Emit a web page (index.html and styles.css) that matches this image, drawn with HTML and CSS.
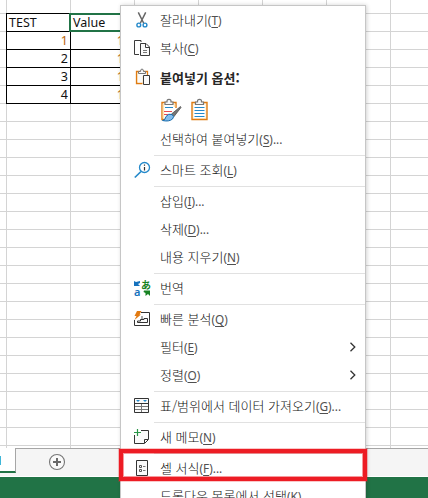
FILE: index.html
```html
<!DOCTYPE html>
<html lang="ko">
<head>
<meta charset="utf-8">
<title>셀 서식</title>
<link rel="stylesheet" href="styles.css">
</head>
<body>
<div class="app">
  <div class="sheet">
    <table class="cells">
      <tr><td class="txt">TEST</td><td class="txt active">Value</td></tr>
      <tr><td class="accent">1</td><td class="accent val">1</td></tr>
      <tr><td>2</td><td class="accent val">1</td></tr>
      <tr><td>3</td><td class="accent val">1</td></tr>
      <tr><td>4</td><td class="accent val">1</td></tr>
    </table>
  </div>
  <div class="tabs">
    <div class="tab"><i></i></div>
    <svg class="add" width="18" height="18" viewBox="0 0 18 18"><circle cx="9" cy="9" r="7.500" fill="#fafafa" stroke="#777" stroke-width="1.100"/><path d="M9 5v8M5 9h8" stroke="#6a6a6a" stroke-width="2"/></svg>
  </div>
  <div class="status"></div>

  <div class="menu">
    <div class="item"><span class="ic"><svg width="18" height="18" viewBox="0 0 18 18"><path d="M5.300 1.300L10.600 12M12.700 1.300L7.400 12" fill="none" stroke="#666" stroke-width="1.500"/><circle cx="5.800" cy="14" r="1.900" fill="#fff" stroke="#2489ca" stroke-width="1.400"/><circle cx="12" cy="14" r="1.900" fill="#fff" stroke="#2489ca" stroke-width="1.400"/></svg></span><span class="lb">잘라내기<b>(<u>T</u>)</b></span></div>
    <div class="item"><span class="ic"><svg width="18" height="18" viewBox="0 0 18 18"><path d="M6 15.500H1.500V1.500H8V3" fill="none" stroke="#3b3b3b"/><path d="M7.500 4.500H13L16.500 8V16.500H7.500Z M12.500 4.500V8.500H16.500" fill="#fafafa" stroke="#3b3b3b"/><path d="M10 11.500h4M10 13.500h4" stroke="#777"/></svg></span><span class="lb">복사<b>(<u>C</u>)</b></span></div>
    <div class="item paste"><span class="ic"><svg width="18" height="18" viewBox="0 0 18 18"><path d="M9.500 14.500H3.500V2.500H14.500V6" fill="#fdf0d8" stroke="#df7b12" stroke-width="1.300"/><path d="M5 3.500H13.500V7H9V13.500H5Z" fill="#fafafa"/><path d="M5.500 4.500V2.500H7.500Q7.500 0 9 0T10.500 2.500H12.500V4.500Z" fill="#f8f8f8" stroke="#777"/><path d="M10.500 6.500H16.500V15.500H10.500Z" fill="#fafafa" stroke="#3b3b3b"/></svg></span><span class="lb strong">붙여넣기 옵션:</span></div>
    <div class="options">
      <svg width="22" height="24" viewBox="0 0 22 24"><path d="M10 21.500H2V4.500H16V10" fill="#fff" stroke="#df7b12" stroke-width="1.400"/><path d="M3.500 20V6M14.500 6v3" stroke="#ffe5b4" stroke-width="1.500"/><path d="M5 6.500V4H7Q6.800 1.300 9 1.300T11 4H13V6.500Z" fill="#f8f8f8" stroke="#777" stroke-width="1.200"/><path d="M5 9.500h8" stroke="#2489ca"/><path d="M4 13.500h8M4 16.500h4" stroke="#e84a50"/><path d="M20.500 8.500L11.500 16L14 18.500L21 9.500Z" fill="#777" stroke="#444" stroke-width=".7"/><path d="M2.500 22.500Q5.500 22 6 18.500Q8.500 15 12 16.500Q15 18.500 12.500 21Q9 24 2.500 22.500Z" fill="#85bdec" stroke="#176cad"/></svg>
      <svg width="22" height="24" viewBox="0 0 22 24"><path d="M2 4.500H17V21.500H2Z" fill="#fff3dc" stroke="#df7b12" stroke-width="1.400"/><path d="M4 6.500H15V20H4Z" fill="#fff"/><path d="M5.500 6.500V4H7.500Q7.300 1.300 9.500 1.300T11.500 4H13.500V6.500Z" fill="#f8f8f8" stroke="#777" stroke-width="1.200"/><path d="M4.500 9.500h10M4.500 12.500h10M4.500 15.500h10M4.500 18.500h10" stroke="#2489ca"/></svg>
    </div>
    <div class="item"><span class="ic"></span><span class="lb">선택하여 붙여넣기<b>(<u>S</u>)...</b></span></div>
    <hr>
    <div class="item"><span class="ic"><svg width="18" height="18" viewBox="0 0 18 18"><circle cx="11.500" cy="6.500" r="5" fill="#fff" stroke="#2489ca" stroke-width="1.300"/><path d="M8 10.500L1.800 16.500" stroke="#2489ca" stroke-width="1.700"/><path d="M11.500 3.500v1.200M11.500 6v3.500" stroke="#333" stroke-width="1.200"/></svg></span><span class="lb">스마트 조회<b>(<u>L</u>)</b></span></div>
    <hr>
    <div class="item"><span class="ic"></span><span class="lb">삽입<b>(<u>I</u>)...</b></span></div>
    <div class="item"><span class="ic"></span><span class="lb">삭제<b>(<u>D</u>)...</b></span></div>
    <div class="item"><span class="ic"></span><span class="lb">내용 지우기<b>(<u>N</u>)</b></span></div>
    <hr>
    <div class="item"><span class="ic"><svg width="18" height="18" viewBox="0 0 18 18"><path d="M1 2L3 3L7 2V4L5 5L7 7H1Z" fill="#1672bd"/><path d="M11 11.500H17V17L15 15L12.500 17V14L10.500 13Z" fill="#178322"/><text x="1" y="17" class="latin">a</text><text x="8" y="9.500" class="kana">あ</text></svg></span><span class="lb">번역</span></div>
    <hr>
    <div class="item"><span class="ic"><svg width="18" height="18" viewBox="0 0 18 18"><path d="M8 2.500H16.500V15.500H1.500V10" fill="#fff" stroke="#333"/><path d="M4.500 12.500H14.500V8.500H11V9.500H7.500V11H4.500Z" fill="#fafafa" stroke="#333"/><path d="M8 6h2v3H8Z" fill="#aaa"/><path d="M4 1H8.500L6.500 4.500H8L1.500 10L3.500 6H1.500Z" fill="#e27a12"/></svg></span><span class="lb">빠른 분석<b>(<u>Q</u>)</b></span></div>
    <div class="item"><span class="ic"></span><span class="lb">필터<b>(<u>E</u>)</b></span><svg class="chev" width="8" height="10" viewBox="0 0 8 10"><path d="M1.500 .8L5.800 5L1.500 9.200" fill="none" stroke="#333" stroke-width="1.300"/></svg></div>
    <div class="item"><span class="ic"></span><span class="lb">정렬<b>(<u>O</u>)</b></span><svg class="chev" width="8" height="10" viewBox="0 0 8 10"><path d="M1.500 .8L5.800 5L1.500 9.200" fill="none" stroke="#333" stroke-width="1.300"/></svg></div>
    <hr>
    <div class="item"><span class="ic"><svg width="18" height="18" viewBox="0 0 18 18"><path d="M1.500 1.500H15.500V15.500H1.500Z" fill="#fafafa" stroke="#333"/><path d="M2 9.500H15M2 12.500H15M8.500 7V15" stroke="#777"/><path d="M2 6.500H15" stroke="#333"/><path d="M3 3H7L5 5ZM10 3H14L12 5Z" fill="#2489ca"/></svg></span><span class="lb">표/범위에서 데이터 가져오기<b>(<u>G</u>)...</b></span></div>
    <hr>
    <div class="item"><span class="ic"><svg width="18" height="18" viewBox="0 0 18 18"><path d="M8 2.500H15.500V11.500L11.500 15.500H1.500V7" fill="#fafafa" stroke="#333"/><path d="M11.500 15V11.500H15" fill="none" stroke="#333"/><path d="M4.500 1V8M1 4.500H8" stroke="#2a9748" stroke-width="1.200"/></svg></span><span class="lb">새 메모<b>(<u>N</u>)</b></span></div>
    <hr>
    <div class="item"><span class="ic"><svg width="18" height="18" viewBox="0 0 18 18"><path d="M3.500 1.500H14.500V16.500H3.500Z" fill="#fafafa" stroke="#333"/><path d="M6.500 6.500h2v2h-2ZM6.500 10.500h2v2h-2Z" fill="none" stroke="#555"/><path d="M10 7.500h2.500M10 11.500h2.500" stroke="#777"/></svg></span><span class="lb">셀 서식<b>(<u>F</u>)...</b></span></div>
    <div class="item"><span class="ic"></span><span class="lb">드롭다운 목록에서 선택<b>(<u>K</u>)...</b></span></div>
  </div>
  <div class="marker"></div>
</div>
</body>
</html>
```

FILE: styles.css
```css
* { box-sizing: border-box; }
body { margin: 0; }
.app {
  position: relative;
  width: 428px;
  height: 498px;
  overflow: hidden;
  background: #fff;
  display: flex;
  flex-direction: column;
  font-family: "Noto Sans", "Noto Sans CJK KR", sans-serif;
}
.sheet {
  height: 448px;
  padding: 13px 0 0 6px;
  background-image:
    linear-gradient(90deg, #d4d4d4 1px, transparent 1px),
    linear-gradient(#d4d4d4 1px, transparent 1px);
  background-size: 64px 18px;
  background-position: 6px 13px;
}
.cells {
  border-collapse: collapse;
  table-layout: fixed;
  width: 129px;
  font-size: 12.5px;
  line-height: 17px;
  color: #111;
}
.cells td {
  height: 18px;
  padding: 0 2px;
  border: 1px solid #000;
  background: #fff;
  text-align: right;
}
.cells .txt { text-align: left; }
.cells .accent { color: #b9650b; }
.cells .val { padding-right: 10px; }
.cells .active { position: relative; }
.active::after {
  content: "";
  position: absolute;
  inset: -1px -1px -1px -2px;
  border: 2px solid #217346;
}
.tabs {
  height: 29px;
  flex: none;
  display: flex;
  align-items: flex-start;
  background: #f5f5f5;
  border-top: 1px solid #a6a6a6;
  border-bottom: 1px solid #fff;
}
.tab {
  width: 16px;
  height: 25px;
  margin-top: -1px;
  padding-top: 8px;
  background: #fff;
  border-right: 1px solid #a6a6a6;
  border-bottom: 2px solid #217346;
}
.tab i { display: block; width: 1px; height: 9px; background: #3fb6d8; }
.add { margin: 4px 0 0 32px; }
.status { flex: 1; background: #217346; }

.menu {
  position: absolute;
  left: 120px;
  top: 5px;
  width: 246px;
  height: 520px;
  background: #fff;
  border: 1px solid #c6c6c6;
  box-shadow: 1px 0 4px rgba(0, 0, 0, .18);
}
.item {
  height: 28px;
  display: flex;
  align-items: center;
  padding: 0 8px 0 12px;
}
.item.paste { height: 32px; }
.ic { width: 27px; height: 18px; flex: none; }
.ic svg, .options svg, .chev { display: block; }
.ic svg { overflow: visible; }
.lb {
  font-family: "Noto Sans CJK KR", sans-serif;
  font-size: 13px;
  font-weight: 300;
  line-height: 20px;
  white-space: nowrap;
  color: #111;
}
.lb b { font-family: "Noto Sans", sans-serif; font-weight: 400; font-size: 11.8px; color: #505050; }
.lb u { text-underline-offset: 2px; }
.lb.strong { font-weight: 700; color: #262626; }
.chev { margin-left: auto; }
.options { height: 31px; display: flex; align-items: center; gap: 8px; padding-left: 39px; }
hr {
  height: 3px;
  margin: 0 0 0 33px;
  border: 0;
  border-bottom: 1px solid #e1e1e1;
}
.latin { font: 600 11px "Noto Sans", sans-serif; fill: #1672bd; }
.kana { font: 700 10px "Noto Sans CJK JP", sans-serif; fill: #178322; }
.marker {
  position: absolute;
  left: 119px;
  top: 449px;
  width: 248px;
  height: 32px;
  border: 4px solid #ed1c24;
  box-shadow: inset 0 0 0 1px rgba(237, 28, 36, .45), 0 0 0 1px rgba(237, 28, 36, .25);
}
```
